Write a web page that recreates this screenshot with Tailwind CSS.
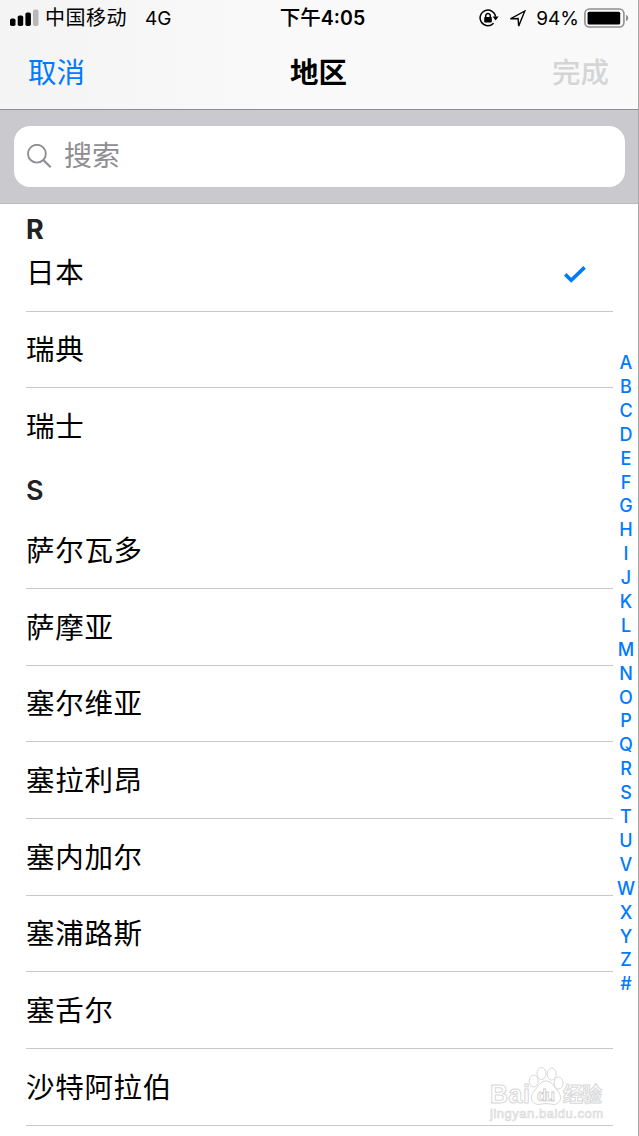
<!DOCTYPE html>
<html lang="zh-CN">
<head>
    <meta charset="UTF-8">
    <meta name="viewport" content="width=device-width, initial-scale=1.0">
    <title>地区</title>
    <script src="https://cdn.jsdelivr.net/npm/@tailwindcss/browser@4"></script>
</head>
<body class="bg-white">
    <div class="relative w-[639px] h-[1136px] overflow-hidden border-r border-[#a8a8a8] bg-white text-black font-['Inter','Noto_Sans_CJK_SC',sans-serif]">

        <!-- Status bar + navigation -->
        <header class="h-[110px] border-b border-[#8e8e90] bg-linear-to-r from-[#f4f4f4] to-[#f9f9f9] to-40%">
            <div class="grid grid-cols-3 items-center h-9 pl-[10px] pr-[9px] text-[19px] leading-none">
                <div class="flex items-center whitespace-nowrap">
                    <svg class="w-[29px] h-[18px] mr-[6px]" viewBox="0 0 29 18">
                        <rect x="0" y="9.5" width="5.5" height="7.5" rx="1.8"/>
                        <rect x="7.7" y="6.5" width="5.5" height="10.5" rx="1.8"/>
                        <rect x="15.4" y="3.5" width="5.5" height="13.5" rx="1.8"/>
                        <rect x="23" y="0.5" width="5.5" height="16.5" rx="1.8" fill="#b8b8b8"/>
                    </svg>
                    <span class="text-[20px] tracking-[0.5px]">中国移动</span>
                    <span class="ml-[18px] text-[19px]">4G</span>
                </div>
                <div class="text-center font-semibold whitespace-nowrap pl-[6px] text-[19.5px]"><span class="font-medium text-[20.5px]">下午</span>4:05</div>
                <div class="flex items-center justify-end">
                    <svg class="w-5 h-[18px] mr-[10px]" viewBox="0 0 20 18" fill="none" stroke="#000" stroke-width="1.5">
                        <path d="M14.6 14.2A7.8 7.8 0 1 1 16.6 7.6"/>
                        <path d="M13.6 7.4h6l-3 4z" fill="#000" stroke="none"/>
                        <rect x="5.2" y="8" width="7.6" height="5.6" rx="0.8" fill="#000" stroke="none"/>
                        <path d="M6.7 8.5V6.8a2.3 2.3 0 0 1 4.6 0v1.7"/>
                    </svg>
                    <svg class="w-[17px] h-[17px] mr-[10px]" viewBox="0 0 17 17" fill="none" stroke="#000" stroke-width="1.4">
                        <path d="M15.8 1L1.4 8.900l7.700-.4.6 7.600z"/>
                    </svg>
                    <span class="text-[19px] mr-[5px]">94%</span>
                    <svg class="w-[45px] h-5" viewBox="0 0 45 20">
                        <rect x="0.9" y="1" width="39" height="18" rx="4.5" fill="none" stroke="#8f8f8f" stroke-width="1.6"/>
                        <rect x="3.6" y="3.8" width="32.6" height="12.6" rx="1.5"/>
                        <path d="M42 6.8a3.4 3.4 0 0 1 0 6.4z" fill="#8f8f8f"/>
                    </svg>
                </div>
            </div>
            <nav class="grid grid-cols-3 items-center h-[73px] pt-px pl-[28px] pr-[29px] text-[28.5px]">
                <span class="text-[#007aff]">取消</span>
                <h1 class="text-center font-bold">地区</h1>
                <span class="text-right font-medium text-[#d5d5d5]">完成</span>
            </nav>
        </header>

        <!-- Search -->
        <div class="h-[94px] bg-[#c9c9ce] border-b border-[#b9b9be] px-[14px] pr-[13px] pt-4">
            <div class="flex items-center h-[61px] rounded-2xl bg-white pl-[13px] text-[28px] text-[#8e8e93]">
                <svg class="w-[25px] h-[25px] mr-[12px]" viewBox="0 0 25 25" fill="none" stroke="#8e8e93" stroke-width="1.9">
                    <circle cx="9.9" cy="9.7" r="8.9"/>
                    <path d="M16.2 16l7.5 7.3" stroke-width="2.2"/>
                </svg>
                <span class="pb-[2px]">搜索</span>
            </div>
        </div>

        <!-- Country list -->
        <main class="pl-[26px] pr-[25px] text-[28.5px] tracking-[0.7px] leading-none">
            <h2 class="h-[31px] pt-[12px] text-[27px] font-bold text-[#222]">R</h2>
            <ul>
                <li class="flex items-center justify-between h-[76.7px] pt-px border-b border-[#c8c7cc]">
                    <span>日本</span>
                    <svg class="w-[22px] h-[17px] mr-[27px] mt-[3px]" viewBox="0 0 22 17" fill="none" stroke="#007aff" stroke-width="3.6">
                        <path d="M1.2 8.4l6 5.8L20.6 1.4"/>
                    </svg>
                </li>
                <li class="flex items-center h-[76.7px] pt-[2px] border-b border-[#c8c7cc]">瑞典</li>
                <li class="flex items-center h-[76.7px] pt-px">瑞士</li>
            </ul>
            <h2 class="flex items-center h-[47.2px] pt-[4px] text-[27px] font-semibold text-[#222]">S</h2>
            <ul>
                <li class="flex items-center h-[76.7px] pt-[2px] border-b border-[#c8c7cc]">萨尔瓦多</li>
                <li class="flex items-center h-[76.7px] pt-[2px] border-b border-[#c8c7cc]">萨摩亚</li>
                <li class="flex items-center h-[76.7px] pt-[2px] border-b border-[#c8c7cc]">塞尔维亚</li>
                <li class="flex items-center h-[76.7px] pt-[2px] border-b border-[#c8c7cc]">塞拉利昂</li>
                <li class="flex items-center h-[76.7px] pt-[2px] border-b border-[#c8c7cc]">塞内加尔</li>
                <li class="flex items-center h-[76.7px] pt-[2px] border-b border-[#c8c7cc]">塞浦路斯</li>
                <li class="flex items-center h-[76.7px] pt-[2px] border-b border-[#c8c7cc]">塞舌尔</li>
                <li class="flex items-center h-[76.7px] pt-[2px] border-b border-[#c8c7cc]">沙特阿拉伯</li>
            </ul>
        </main>

        <!-- Alphabet index -->
        <div class="absolute right-0 top-[351.2px] w-6 grid auto-rows-[23.9px] place-items-center text-[18px] leading-none font-medium text-[#007aff]">
            <span>A</span><span>B</span><span>C</span><span>D</span><span>E</span><span>F</span><span>G</span>
            <span>H</span><span>I</span><span>J</span><span>K</span><span>L</span><span>M</span><span>N</span>
            <span>O</span><span>P</span><span>Q</span><span>R</span><span>S</span><span>T</span><span>U</span>
            <span>V</span><span>W</span><span>X</span><span>Y</span><span>Z</span><span>#</span>
        </div>

        <!-- Watermark -->
        <svg class="absolute left-[488px] top-[1064px] w-[120px] h-[60px]" viewBox="0 0 120 60" fill="#fff" stroke="#d8d8d8" stroke-width="1">
            <text x="2" y="38.5" font-family="Liberation Sans" font-weight="bold" font-size="25" textLength="40">Bai</text>
            <path d="M58 17c-6 0-8 6-11 9-6 6-4 14 3 14.500 3 0 5-1 8-1s5 1 8 1c7-.5 9-8.500 3-14.500-3-3-5-9-11-9z"/>
            <ellipse cx="45.7" cy="17" rx="4.5" ry="6"/>
            <ellipse cx="53.5" cy="9.5" rx="4.5" ry="6"/>
            <ellipse cx="63.7" cy="10" rx="4.5" ry="6"/>
            <ellipse cx="70.5" cy="19" rx="4.5" ry="6"/>
            <text x="49" y="36.5" font-family="Liberation Sans" font-weight="bold" font-size="16" textLength="18" stroke="#cdcdcd" stroke-width="0.8">du</text>
            <text x="75" y="38" font-family="Noto Sans CJK SC" font-weight="bold" font-size="20" textLength="39">经验</text>
            <text x="2" y="54" font-family="Liberation Sans" font-size="13" stroke-width="0.7" textLength="113">jingyan.baidu.com</text>
        </svg>
    </div>
</body>
</html>
